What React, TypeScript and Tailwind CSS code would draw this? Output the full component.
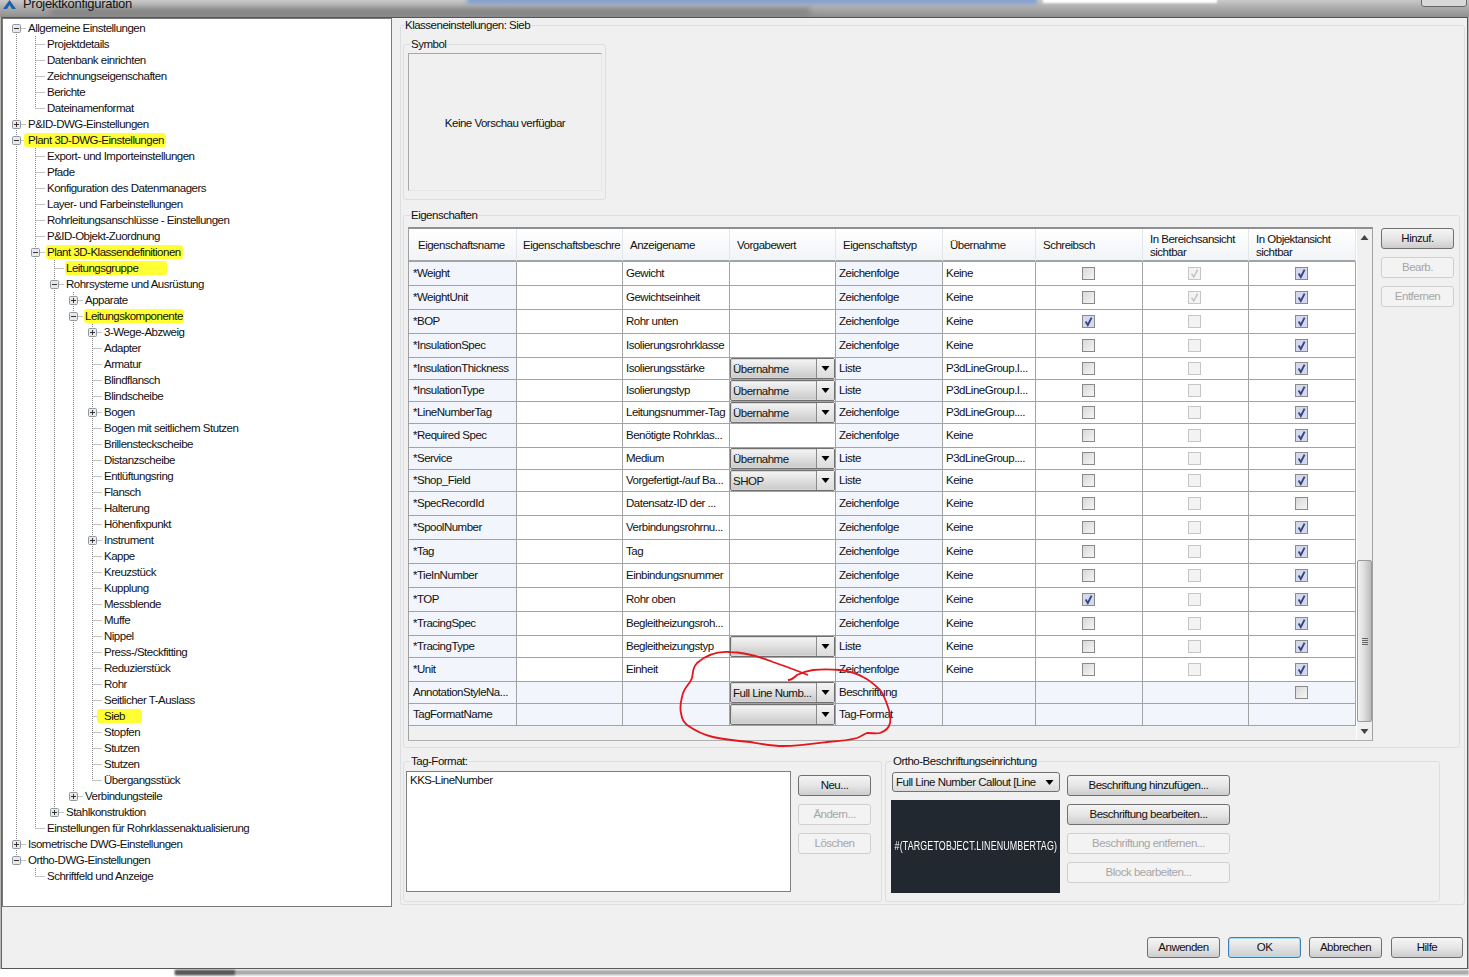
type TreeNode = {
  label: string;
  hl?: string;
  open?: boolean;
  children?: TreeNode[];
  collapsed?: boolean;
};

type Check = "off" | "on" | "dis" | "disOn" | null;

type Row = {
  name: string;
  display?: string;
  combo?: string;
  type: string;
  inherit?: string;
  checks: [Check, Check, Check];
  blue?: boolean;
};

const leaf = (label: string, hl?: string): TreeNode => ({ label, hl });
const closed = (label: string): TreeNode => ({ label, collapsed: true });

const TREE: TreeNode[] = [
  {
    label: "Allgemeine Einstellungen",
    children: [
      leaf("Projektdetails"),
      leaf("Datenbank einrichten"),
      leaf("Zeichnungseigenschaften"),
      leaf("Berichte"),
      leaf("Dateinamenformat"),
    ],
  },
  closed("P&ID-DWG-Einstellungen"),
  {
    label: "Plant 3D-DWG-Einstellungen",
    hl: "-ml-[4px] pl-[4px] pr-[2px]",
    children: [
      leaf("Export- und Importeinstellungen"),
      leaf("Pfade"),
      leaf("Konfiguration des Datenmanagers"),
      leaf("Layer- und Farbeinstellungen"),
      leaf("Rohrleitungsanschlüsse - Einstellungen"),
      leaf("P&ID-Objekt-Zuordnung"),
      {
        label: "Plant 3D-Klassendefinitionen",
        hl: "-ml-[1px] pl-[1px] pr-[2px]",
        children: [
          leaf("Leitungsgruppe", "-ml-[1px] pl-[1px] pr-[29px]"),
          {
            label: "Rohrsysteme und Ausrüstung",
            children: [
              closed("Apparate"),
              {
                label: "Leitungskomponente",
                hl: "-ml-[1px] pl-[1px] pr-[1px]",
                children: [
                  closed("3-Wege-Abzweig"),
                  leaf("Adapter"),
                  leaf("Armatur"),
                  leaf("Blindflansch"),
                  leaf("Blindscheibe"),
                  closed("Bogen"),
                  leaf("Bogen mit seitlichem Stutzen"),
                  leaf("Brillensteckscheibe"),
                  leaf("Distanzscheibe"),
                  leaf("Entlüftungsring"),
                  leaf("Flansch"),
                  leaf("Halterung"),
                  leaf("Höhenfixpunkt"),
                  closed("Instrument"),
                  leaf("Kappe"),
                  leaf("Kreuzstück"),
                  leaf("Kupplung"),
                  leaf("Messblende"),
                  leaf("Muffe"),
                  leaf("Nippel"),
                  leaf("Press-/Steckfitting"),
                  leaf("Reduzierstück"),
                  leaf("Rohr"),
                  leaf("Seitlicher T-Auslass"),
                  leaf("Sieb", "-ml-[7px] pl-[7px] pr-[17px]"),
                  leaf("Stopfen"),
                  leaf("Stutzen"),
                  leaf("Stutzen"),
                  leaf("Übergangsstück"),
                ],
              },
              closed("Verbindungsteile"),
            ],
          },
          closed("Stahlkonstruktion"),
        ],
      },
      leaf("Einstellungen für Rohrklassenaktualisierung"),
    ],
  },
  closed("Isometrische DWG-Einstellungen"),
  {
    label: "Ortho-DWG-Einstellungen",
    children: [leaf("Schriftfeld und Anzeige")],
  },
];

const std = (name: string, display: string, first: Check = "off", third: Check = "on"): Row => ({
  name,
  display,
  type: "Zeichenfolge",
  inherit: "Keine",
  checks: [first, "dis", third],
});

const ROWS: Row[] = [
  { ...std("*Weight", "Gewicht"), checks: ["off", "disOn", "on"] },
  { ...std("*WeightUnit", "Gewichtseinheit"), checks: ["off", "disOn", "on"] },
  std("*BOP", "Rohr unten", "on"),
  std("*InsulationSpec", "Isolierungsrohrklasse"),
  { ...std("*InsulationThickness", "Isolierungsstärke"), combo: "Übernahme", type: "Liste", inherit: "P3dLineGroup.I..." },
  { ...std("*InsulationType", "Isolierungstyp"), combo: "Übernahme", type: "Liste", inherit: "P3dLineGroup.I..." },
  { ...std("*LineNumberTag", "Leitungsnummer-Tag"), combo: "Übernahme", inherit: "P3dLineGroup...." },
  std("*Required Spec", "Benötigte Rohrklas..."),
  { ...std("*Service", "Medium"), combo: "Übernahme", type: "Liste", inherit: "P3dLineGroup...." },
  { ...std("*Shop_Field", "Vorgefertigt-/auf Ba..."), combo: "SHOP", type: "Liste" },
  std("*SpecRecordId", "Datensatz-ID der ...", "off", "off"),
  std("*SpoolNumber", "Verbindungsrohrnu..."),
  std("*Tag", "Tag"),
  std("*TieInNumber", "Einbindungsnummer"),
  std("*TOP", "Rohr oben", "on"),
  std("*TracingSpec", "Begleitheizungsroh..."),
  { ...std("*TracingType", "Begleitheizungstyp"), combo: "", type: "Liste" },
  std("*Unit", "Einheit"),
  { name: "AnnotationStyleNa...", combo: "Full Line Numb...", type: "Beschriftung", checks: [null, null, "off"], blue: true },
  { name: "TagFormatName", combo: "", type: "Tag-Format", checks: [null, null, null], blue: true },
];

const GRID = "grid grid-cols-[108px_106px_107px_106px_107px_93px_107px_106px_107px]";
const CELL = "flex items-center border-r border-b border-[#a3a3a3] min-w-0 whitespace-nowrap overflow-hidden";

function Guide({ kind, expander }: { kind: "blank" | "pass" | "tee" | "last" | "first"; expander?: "plus" | "minus" }) {
  const top = kind === "pass" || kind === "tee" || kind === "last";
  const bottom = kind === "pass" || kind === "tee" || kind === "first";
  const across = kind === "tee" || kind === "last" || kind === "first";
  return (
    <svg width="19" height="16" className="shrink-0">
      {top && <line x1="9.5" y1="0" x2="9.5" y2="8" stroke="#8a8a8a" strokeDasharray="1 1" />}
      {bottom && <line x1="9.5" y1="8" x2="9.5" y2="16" stroke="#8a8a8a" strokeDasharray="1 1" />}
      {across && <line x1="9.5" y1="8.5" x2="19" y2="8.5" stroke="#8a8a8a" strokeDasharray="1 1" />}
      {expander && (
        <>
          <rect x="5.5" y="4.5" width="8" height="8" rx="1" fill="#e8e8e8" stroke="#8f98a0" />
          <line x1="7" y1="8.5" x2="12" y2="8.5" stroke="#333" />
          {expander === "plus" && <line x1="9.5" y1="6" x2="9.5" y2="11" stroke="#333" />}
        </>
      )}
    </svg>
  );
}

function TreeRows({ nodes, guides, root }: { nodes: TreeNode[]; guides: boolean[]; root?: boolean }) {
  return (
    <>
      {nodes.map((node, i) => {
        const isLast = i === nodes.length - 1;
        const kind = root && i === 0 ? "first" : isLast ? "last" : "tee";
        return (
          <div key={`${node.label}-${i}`}>
            <div className="flex h-4 items-center">
              {guides.map((g, j) => (
                <Guide key={j} kind={g ? "pass" : "blank"} />
              ))}
              <Guide kind={kind} expander={node.children ? "minus" : node.collapsed ? "plus" : undefined} />
              <span className="ml-[2px] leading-4 whitespace-nowrap">
                <span className={node.hl ? `rounded-[3px] bg-[#ffff33] py-px ${node.hl}` : ""}>{node.label}</span>
              </span>
            </div>
            {node.children && <TreeRows nodes={node.children} guides={[...guides, !isLast]} />}
          </div>
        );
      })}
    </>
  );
}

function GroupBox({
  title,
  className,
  legend = "ml-[6px]",
  children,
}: {
  title: string;
  className: string;
  legend?: string;
  children: React.ReactNode;
}) {
  return (
    <fieldset className={`min-w-0 rounded-[3px] border border-[#dcdfe2] ${className}`}>
      <legend className={`h-4 px-px leading-4 whitespace-nowrap ${legend}`}>{title}</legend>
      {children}
    </fieldset>
  );
}

function Btn({ label, disabled, w = "w-[73px]", primary }: { label: string; disabled?: boolean; w?: string; primary?: boolean }) {
  const look = disabled
    ? "border-[#cfcfcf] bg-[#f3f3f3] text-[#a6a6a6]"
    : primary
      ? "border-[#3c7fb1] shadow-[inset_0_0_0_1px_#a5dcf5] bg-linear-to-b from-[#f5f5f5] to-[#cdcdcd]"
      : "border-[#707070] bg-linear-to-b from-[#f5f5f5] via-[#e6e6e6] to-[#cdcdcd]";
  return (
    <button className={`flex h-[21px] items-center justify-center rounded-[3px] border ${w} ${look}`}>{label}</button>
  );
}

function Arrow({ up, color = "#000" }: { up?: boolean; color?: string }) {
  return (
    <svg width="9" height="5" viewBox="0 0 9 5">
      <polygon points={up ? "0.5,5 8.5,5 4.5,0" : "0.5,0 8.5,0 4.5,5"} fill={color} />
    </svg>
  );
}

function Combo({ value }: { value: string }) {
  return (
    <div className="flex h-full w-full items-stretch rounded-[2px] border border-[#6f6f6f] bg-linear-to-b from-[#f6f6f6] to-[#c9c9c9] shadow-[inset_0_0_0_1px_#d8d8d8]">
      <span className="flex-1 overflow-hidden pl-[2px] leading-[20px] whitespace-nowrap">{value}</span>
      <span className="flex w-[18px] items-center justify-center border-l border-[#8a8a8a] bg-linear-to-b from-[#f4f4f4] to-[#dcdcdc]">
        <Arrow />
      </span>
    </div>
  );
}

function CheckBox({ state }: { state: Check }) {
  if (!state) return null;
  const dimmed = state === "dis" || state === "disOn";
  const look = dimmed
    ? "border-[#c6c6c6] bg-[#f3f3f3]"
    : state === "on"
      ? "border-[#8a8a8a] bg-[#d4d9ec]"
      : "border-[#8a8a8a] bg-linear-to-br from-[#d8d8d8] to-[#f6f6f6]";
  return (
    <span className={`flex h-[13px] w-[13px] items-center justify-center border ${look}`}>
      {(state === "on" || state === "disOn") && (
        <svg width="11" height="11" viewBox="0 0 11 11">
          <path d="M2.6 5.6 L4.8 9 L8.6 1.6" fill="none" stroke={state === "on" ? "#3a4488" : "#bdbdbd"} strokeWidth={state === "on" ? 1.9 : 1.3} />
        </svg>
      )}
    </span>
  );
}

function TableRow({ row }: { row: Row }) {
  const tint = row.blue ? "bg-[#f2f5fb]" : "bg-white";
  return (
    <div className={`${GRID} ${row.combo !== undefined ? "h-[22px]" : "h-[24px]"}`}>
      <div className={`${CELL} bg-[#f2f5fb] pl-1`}>{row.name}</div>
      <div className={`${CELL} ${tint}`} />
      <div className={`${CELL} ${tint} pl-[3px]`}>{row.display}</div>
      <div className={`${CELL} ${tint}`}>{row.combo !== undefined && <Combo value={row.combo} />}</div>
      <div className={`${CELL} bg-[#f2f5fb] pl-[3px]`}>{row.type}</div>
      <div className={`${CELL} ${tint} pl-[3px]`}>{row.inherit}</div>
      {row.checks.map((c, i) => (
        <div key={i} className={`${CELL} ${tint} justify-center pr-[2px]`}>
          <CheckBox state={c} />
        </div>
      ))}
    </div>
  );
}

function HeaderCell({ pad = "pl-[7px]", children }: { pad?: string; children: React.ReactNode }) {
  return (
    <div className={`flex items-center border-r border-b-2 border-r-[#e3e6ea] border-b-[#a3a3a3] pt-[2px] leading-[13px] min-w-0 overflow-hidden whitespace-nowrap ${pad}`}>
      {children}
    </div>
  );
}

function PropertyTable() {
  return (
    <div className="flex h-[514px] w-[965px] border border-t-2 border-[#a0a0a0] border-t-[#909090] border-b-[#b0b0b0] bg-[#f0f0f0]">
      <div className="w-[947px]">
        <div className={`${GRID} h-[33px] bg-linear-to-b from-white to-[#f0f3f7]`}>
          <HeaderCell pad="pl-[9px]">Eigenschaftsname</HeaderCell>
          <HeaderCell pad="pl-[6px]">Eigenschaftsbeschre</HeaderCell>
          <HeaderCell>Anzeigename</HeaderCell>
          <HeaderCell>Vorgabewert</HeaderCell>
          <HeaderCell>Eigenschaftstyp</HeaderCell>
          <HeaderCell>Übernahme</HeaderCell>
          <HeaderCell>Schreibsch</HeaderCell>
          <HeaderCell>
            <span>
              In Bereichsansicht
              <br />
              sichtbar
            </span>
          </HeaderCell>
          <HeaderCell>
            <span>
              In Objektansicht
              <br />
              sichtbar
            </span>
          </HeaderCell>
        </div>
        {ROWS.map((row) => (
          <TableRow key={row.name} row={row} />
        ))}
      </div>
      <div className="flex w-4 flex-col border-l border-white bg-[#f0f0f0]">
        <div className="flex h-4 items-center justify-center">
          <Arrow up color="#444" />
        </div>
        <div className="flex-1" />
        <div className="flex h-[162px] items-center justify-center rounded-[2px] border border-[#9a9a9a] bg-linear-to-r from-[#f2f2f2] via-[#dcdcdc] to-[#bcbcbc]">
          <div className="flex flex-col gap-px">
            <div className="h-px w-[6px] bg-[#666]" />
            <div className="h-px w-[6px] bg-[#666]" />
            <div className="h-px w-[6px] bg-[#666]" />
            <div className="h-px w-[6px] bg-[#666]" />
          </div>
        </div>
        <div className="flex h-[18px] items-center justify-center">
          <Arrow color="#444" />
        </div>
      </div>
    </div>
  );
}

export default function App() {
  return (
    <div className="relative flex h-[977px] w-[1469px] flex-col overflow-hidden bg-[#b8b8b8] font-['Liberation_Sans',sans-serif] text-[11.5px] tracking-[-0.5px] text-[#111]">
      {/* window chrome, blurred in the source picture */}
      <div className="relative h-[17px] overflow-hidden bg-linear-to-b from-[#c9c9c9] via-[#a9a9a9] to-[#8f8f8f]">
        <div className="absolute top-[-3px] left-[467px] h-[7px] w-[570px] bg-[#7f9fd0] blur-[2px]" />
        <div className="absolute top-[-3px] left-[1043px] h-[6px] w-[174px] bg-white blur-[1px]" />
        <div className="absolute top-[9px] left-[50px] h-[6px] w-[760px] bg-[#7c7c7c] blur-[3px]" />
        <div className="absolute top-[-6px] left-[1421px] h-[13px] w-[46px] rounded-[3px] border border-[#666] bg-[#d8d8d8]" />
        <div className="relative flex h-2 items-center">
          <svg width="13" height="9" viewBox="0 0 13 9" className="ml-[3px]">
            <polygon points="6.5,0 13,9 9,9 6.5,5 4,9 0,9" fill="#1d5fa8" />
          </svg>
          <span className="ml-[7px] text-[13px] tracking-[-0.3px] whitespace-nowrap">Projektkonfiguration</span>
        </div>
      </div>

      {/* dialog */}
      <div className="ml-px flex h-[952px] w-[1467px] flex-col border border-l-[#666] border-[#555] bg-[#f0f0f0]">
        <div className="flex h-[889px]">
          <div className="h-[889px] w-[390px] border border-[#7a7a7a] bg-white pt-px pl-1">
            <TreeRows nodes={TREE} guides={[]} root />
          </div>
          <div className="ml-[8px] flex-1">
            <GroupBox title="Klasseneinstellungen: Sieb" legend="ml-[3px]" className="h-[888px] w-[1065px] -mt-[1px]">
              <GroupBox title="Symbol" className="mt-[3px] ml-[2px] h-[164px] w-[203px]">
                <div className="mt-px ml-1 flex h-[138px] w-[194px] items-center justify-center border border-t-[#a8a8a8] border-l-[#a8a8a8] border-r-[#e6e6e6] border-b-[#e6e6e6] pt-[3px]">
                  Keine Vorschau verfügbar
                </div>
              </GroupBox>
              <GroupBox title="Eigenschaften" className="mt-[7px] ml-[2px] h-[541px] w-[1057px]">
                <div className="mt-1 ml-1 flex items-start gap-2">
                  <PropertyTable />
                  <div className="mt-px flex flex-col gap-2">
                    <Btn label="Hinzuf." />
                    <Btn label="Bearb." disabled />
                    <Btn label="Entfernen" disabled />
                  </div>
                </div>
              </GroupBox>
              <div className="mt-[5px] ml-[2px] flex gap-[3px]">
                <GroupBox title="Tag-Format:" className="h-[149px] w-[479px]">
                  <div className="mt-[2px] ml-[2px] flex items-start gap-[7px]">
                    <div className="h-[121px] w-[385px] border border-[#7f7f7f] bg-white pl-[3px] leading-[17px]">KKS-LineNumber</div>
                    <div className="mt-[4px] flex flex-col gap-2">
                      <Btn label="Neu..." />
                      <Btn label="Ändern..." disabled />
                      <Btn label="Löschen" disabled />
                    </div>
                  </div>
                </GroupBox>
                <GroupBox title="Ortho-Beschriftungseinrichtung" className="h-[149px] w-[555px]">
                  <div className="mt-[3px] ml-[5px] flex items-start gap-[7px]">
                    <div className="flex w-[169px] flex-col gap-2">
                      <div className="ml-px h-5 w-[168px]">
                        <div className="flex h-full items-stretch rounded-[3px] border border-[#707070] bg-linear-to-b from-[#f6f6f6] to-[#dcdcdc]">
                          <span className="flex-1 overflow-hidden pl-[3px] leading-[18px] whitespace-nowrap">Full Line Number Callout [Line</span>
                          <span className="flex w-[20px] items-center justify-center">
                            <Arrow />
                          </span>
                        </div>
                      </div>
                      <div className="flex h-[93px] items-center justify-center overflow-hidden bg-[#212830] pb-[2px] text-white">
                        <span className="scale-x-[0.74] text-[12px] tracking-[0.2px] whitespace-nowrap">#(TARGETOBJECT.LINENUMBERTAG)</span>
                      </div>
                    </div>
                    <div className="mt-[3px] flex flex-col gap-2">
                      <Btn label="Beschriftung hinzufügen..." w="w-[163px]" />
                      <Btn label="Beschriftung bearbeiten..." w="w-[163px]" />
                      <Btn label="Beschriftung entfernen..." w="w-[163px]" disabled />
                      <Btn label="Block bearbeiten..." w="w-[163px]" disabled />
                    </div>
                  </div>
                </GroupBox>
              </div>
            </GroupBox>
          </div>
        </div>
        <div className="flex justify-end gap-2 pt-[30px] pr-[4px]">
          <Btn label="Anwenden" />
          <Btn label="OK" primary />
          <Btn label="Abbrechen" />
          <div className="ml-px">
            <Btn label="Hilfe" w="w-[72px]" />
          </div>
        </div>
      </div>

      {/* strip below the dialog */}
      <div className="relative flex-1 bg-white">
        <div className="absolute top-px left-[175px] h-[5px] w-[1294px] bg-[#a8a8a8] blur-[1px]" />
        <div className="absolute top-px left-[175px] h-[5px] w-[60px] bg-[#555] blur-[1px]" />
      </div>

      {/* red marker circle drawn over the table */}
      <svg className="pointer-events-none absolute inset-0" width="1469" height="977">
        <path
          d="M808 675 C795 670 785 666 773 662 C755 655 742 652 730 652 C718 651 706 655 697 663 C690 671 695 676 690 682 C684 690 683 692 682 697 C680 705 680 709 681 713 C682 720 684 722 687 725 C697 732 704 735 713 737 C727 740 738 741 750 742 C762 744 772 746 783 746 C798 746 812 744 827 742 C840 741 850 740 857 738 C862 736 864 734 867 733 C873 733 877 734 880 733 C886 731 889 728 890 723 C891 717 890 712 888 707 C886 701 884 695 880 690 C875 685 870 680 863 677 C856 673 848 671 840 670 C830 669 822 669 813 670 C806 671 801 673 797 675 C794 678 791 680 788 680"
          fill="none"
          stroke="#e2161c"
          strokeWidth="1.8"
        />
      </svg>
    </div>
  );
}
